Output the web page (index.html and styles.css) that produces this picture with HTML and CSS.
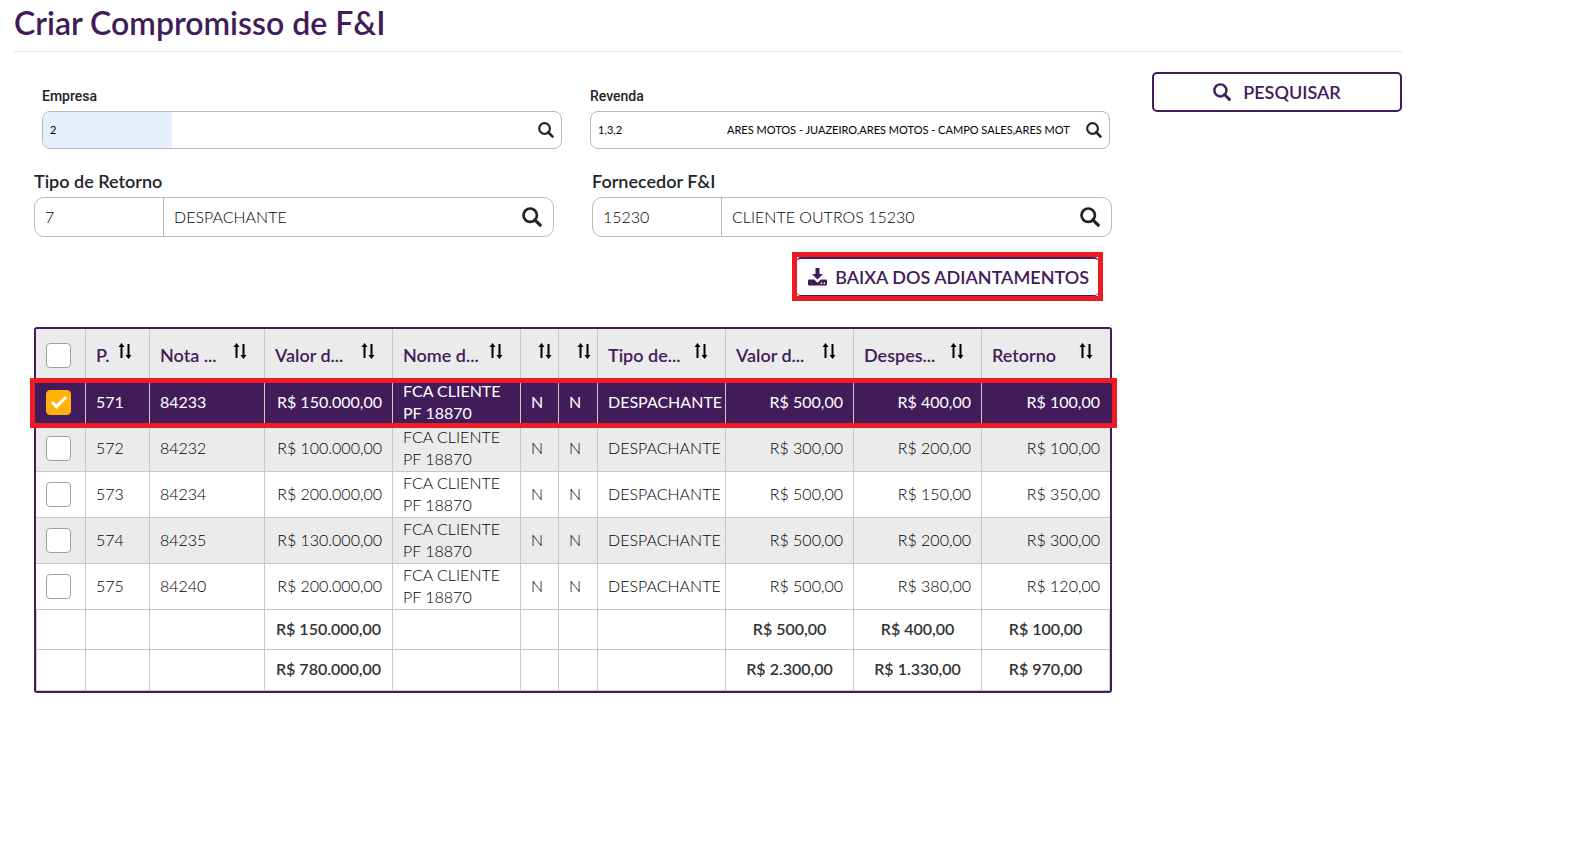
FILE: index.html
```html
<!DOCTYPE html>
<html lang="pt-BR">
<head>
  <meta charset="UTF-8">
  <meta name="viewport" content="width=device-width, initial-scale=1.0">
  <title>Criar Compromisso de F&amp;I</title>
  <link rel="stylesheet" href="styles.css">
</head>
<body>
  <svg class="symbols" aria-hidden="true">
    <symbol id="icon-search" viewBox="0 0 20 20">
      <circle cx="8.200" cy="8.200" r="6.700" fill="none" stroke="currentColor" stroke-width="2.700"/>
      <path d="M12.800 12.800l5.400 5.400" fill="none" stroke="currentColor" stroke-width="3.200" stroke-linecap="round"/>
    </symbol>
    <symbol id="icon-download" viewBox="0 0 19 18">
      <path fill="currentColor" d="M7.500 0h4v6H15L9.500 11.600 4 6h3.500z"/>
      <path fill="currentColor" fill-rule="evenodd" d="M1 11.500h5.200l3.300 3.200 3.300-3.200H18a1 1 0 0 1 1 1v4a1 1 0 0 1-1 1H1a1 1 0 0 1-1-1v-4a1 1 0 0 1 1-1zM12.600 14.500v1.500h1.500v-1.500zM15.600 14.500v1.500h1.500v-1.500z"/>
    </symbol>
    <symbol id="icon-sort" viewBox="0 0 14 16">
      <path fill="currentColor" d="M3.500 0L6.500 4H4.500v11h-2V4H.5zM9.500 1h2v11h2l-3 4-3-4h2z"/>
    </symbol>
  </svg>

  <div class="page">
    <header class="page-header">
      <h1>Criar Compromisso de F&amp;I</h1>
    </header>

    <div class="content">
      <main class="main">
        <div class="filters filters-small">
          <div class="field">
            <label for="empresa">Empresa</label>
            <div class="lookup">
              <input id="empresa" class="code filled" type="text" value="2">
              <input class="description" type="text" aria-label="Nome da empresa">
              <button type="button" aria-label="Buscar empresa"><svg><use href="#icon-search"/></svg></button>
            </div>
          </div>
          <div class="field">
            <label for="revenda">Revenda</label>
            <div class="lookup">
              <input id="revenda" class="code" type="text" value="1,3,2">
              <input class="description" type="text" aria-label="Nome da revenda" value="ARES MOTOS - JUAZEIRO,ARES MOTOS - CAMPO SALES,ARES MOT">
              <button type="button" aria-label="Buscar revenda"><svg><use href="#icon-search"/></svg></button>
            </div>
          </div>
        </div>

        <div class="filters">
          <div class="field">
            <label for="tipo">Tipo de Retorno</label>
            <div class="lookup">
              <input id="tipo" class="code" type="text" value="7">
              <input class="description" type="text" aria-label="Descrição do tipo" value="DESPACHANTE">
              <button type="button" aria-label="Buscar tipo"><svg><use href="#icon-search"/></svg></button>
            </div>
          </div>
          <div class="field">
            <label for="fornecedor">Fornecedor F&amp;I</label>
            <div class="lookup">
              <input id="fornecedor" class="code" type="text" value="15230">
              <input class="description" type="text" aria-label="Nome do fornecedor" value="CLIENTE OUTROS 15230">
              <button type="button" aria-label="Buscar fornecedor"><svg><use href="#icon-search"/></svg></button>
            </div>
          </div>
        </div>

        <div class="actions">
          <div class="marked">
            <button class="btn-settle" type="button">
              <svg><use href="#icon-download"/></svg>
              BAIXA DOS ADIANTAMENTOS
            </button>
          </div>
        </div>

        <div class="table-box">
          <table>
            <colgroup>
              <col class="col-check">
              <col class="col-proposal">
              <col class="col-invoice">
              <col class="col-wide">
              <col class="col-wide">
              <col class="col-new">
              <col class="col-used">
              <col class="col-wide">
              <col class="col-wide">
              <col class="col-wide">
              <col class="col-wide">
            </colgroup>
            <thead>
              <tr>
                <th><input type="checkbox" aria-label="Selecionar todos"></th>
                <th><div class="head"><span>P.</span><button type="button" aria-label="Ordenar"><svg><use href="#icon-sort"/></svg></button></div></th>
                <th><div class="head"><span>Nota ...</span><button type="button" aria-label="Ordenar"><svg><use href="#icon-sort"/></svg></button></div></th>
                <th><div class="head"><span>Valor d...</span><button type="button" aria-label="Ordenar"><svg><use href="#icon-sort"/></svg></button></div></th>
                <th><div class="head"><span>Nome d...</span><button type="button" aria-label="Ordenar"><svg><use href="#icon-sort"/></svg></button></div></th>
                <th class="flag"><div class="head"><button type="button" aria-label="Ordenar"><svg><use href="#icon-sort"/></svg></button></div></th>
                <th class="flag"><div class="head"><button type="button" aria-label="Ordenar"><svg><use href="#icon-sort"/></svg></button></div></th>
                <th><div class="head"><span>Tipo de...</span><button type="button" aria-label="Ordenar"><svg><use href="#icon-sort"/></svg></button></div></th>
                <th><div class="head"><span>Valor d...</span><button type="button" aria-label="Ordenar"><svg><use href="#icon-sort"/></svg></button></div></th>
                <th><div class="head"><span>Despes...</span><button type="button" aria-label="Ordenar"><svg><use href="#icon-sort"/></svg></button></div></th>
                <th><div class="head"><span>Retorno</span><button type="button" aria-label="Ordenar"><svg><use href="#icon-sort"/></svg></button></div></th>
              </tr>
            </thead>
            <tbody>
              <tr class="selected">
                <td><input type="checkbox" aria-label="Selecionar 571" checked></td>
                <td>571</td>
                <td>84233</td>
                <td class="money">R$ 150.000,00</td>
                <td>FCA CLIENTE PF 18870</td>
                <td>N</td>
                <td>N</td>
                <td>DESPACHANTE</td>
                <td class="money">R$ 500,00</td>
                <td class="money">R$ 400,00</td>
                <td class="money">R$ 100,00</td>
              </tr>
              <tr>
                <td><input type="checkbox" aria-label="Selecionar 572"></td>
                <td>572</td>
                <td>84232</td>
                <td class="money">R$ 100.000,00</td>
                <td>FCA CLIENTE PF 18870</td>
                <td>N</td>
                <td>N</td>
                <td>DESPACHANTE</td>
                <td class="money">R$ 300,00</td>
                <td class="money">R$ 200,00</td>
                <td class="money">R$ 100,00</td>
              </tr>
              <tr>
                <td><input type="checkbox" aria-label="Selecionar 573"></td>
                <td>573</td>
                <td>84234</td>
                <td class="money">R$ 200.000,00</td>
                <td>FCA CLIENTE PF 18870</td>
                <td>N</td>
                <td>N</td>
                <td>DESPACHANTE</td>
                <td class="money">R$ 500,00</td>
                <td class="money">R$ 150,00</td>
                <td class="money">R$ 350,00</td>
              </tr>
              <tr>
                <td><input type="checkbox" aria-label="Selecionar 574"></td>
                <td>574</td>
                <td>84235</td>
                <td class="money">R$ 130.000,00</td>
                <td>FCA CLIENTE PF 18870</td>
                <td>N</td>
                <td>N</td>
                <td>DESPACHANTE</td>
                <td class="money">R$ 500,00</td>
                <td class="money">R$ 200,00</td>
                <td class="money">R$ 300,00</td>
              </tr>
              <tr>
                <td><input type="checkbox" aria-label="Selecionar 575"></td>
                <td>575</td>
                <td>84240</td>
                <td class="money">R$ 200.000,00</td>
                <td>FCA CLIENTE PF 18870</td>
                <td>N</td>
                <td>N</td>
                <td>DESPACHANTE</td>
                <td class="money">R$ 500,00</td>
                <td class="money">R$ 380,00</td>
                <td class="money">R$ 120,00</td>
              </tr>
            </tbody>
            <tfoot>
              <tr>
                <td></td>
                <td></td>
                <td></td>
                <td>R$ 150.000,00</td>
                <td></td>
                <td></td>
                <td></td>
                <td></td>
                <td>R$ 500,00</td>
                <td>R$ 400,00</td>
                <td>R$ 100,00</td>
              </tr>
              <tr>
                <td></td>
                <td></td>
                <td></td>
                <td>R$ 780.000,00</td>
                <td></td>
                <td></td>
                <td></td>
                <td></td>
                <td>R$ 2.300,00</td>
                <td>R$ 1.330,00</td>
                <td>R$ 970,00</td>
              </tr>
            </tfoot>
          </table>
        </div>
      </main>

      <aside class="sidebar">
        <button class="btn-search" type="button">
          <svg><use href="#icon-search"/></svg>
          PESQUISAR
        </button>
      </aside>
    </div>
  </div>
</body>
</html>
```
FILE: styles.css
```css
* {
  margin: 0;
  padding: 0;
  box-sizing: border-box;
}

body {
  background-color: #fff;
  color: #212529;
  font-family: 'Lato', sans-serif;
  font-size: 16px;
}

button,
input {
  font-family: inherit;
  font-size: inherit;
  color: inherit;
}

button {
  background: none;
  border: none;
  cursor: pointer;
}

svg {
  display: block;
  flex: none;
}

.symbols {
  position: absolute;
  width: 0;
  height: 0;
}

.page {
  margin: 0 189px 0 14px;
}

.page-header {
  height: 52px;
  border-bottom: 1px solid #e2e2e2;
}

.page-header h1 {
  font-size: 32px;
  line-height: 46px;
  font-weight: 600;
  color: #421c5a;
}

.content {
  display: flex;
  gap: 40px;
  padding: 20px 0 0 20px;
}

.main {
  flex: 1;
  min-width: 0;
}

.sidebar {
  width: 250px;
}

/* lookup fields */
.filters {
  display: grid;
  grid-template-columns: 1fr 1fr;
  gap: 38px;
  margin-top: 20px;
}

.field label {
  display: block;
  height: 28px;
  font-size: 18px;
  line-height: 24px;
  font-weight: 600;
}

.lookup {
  display: flex;
  height: 40px;
  border: 1px solid #b9b9b9;
  border-radius: 10px;
  overflow: hidden;
}

.lookup input {
  min-width: 0;
  border: none;
  outline: none;
  background: none;
  padding: 0 0 1px 10px;
  font-weight: 300;
  color: #000;
}

.lookup .code {
  width: 129px;
  border-right: 1px solid #b9b9b9;
}

.lookup .description {
  flex: 1;
}

.lookup button {
  width: 42px;
  display: flex;
  align-items: center;
  justify-content: center;
}

.lookup svg {
  width: 20px;
  height: 20px;
}

.filters-small {
  gap: 28px;
  margin: 0 2px 0 8px;
  padding-top: 11px;
}

.filters-small label {
  font-family: 'Roboto', sans-serif;
  font-size: 14px;
  line-height: 26px;
  font-weight: 500;
}

.filters-small .lookup {
  height: 38px;
  border-radius: 8px;
  font-size: 11px;
}

.filters-small .lookup input {
  padding-left: 7px;
  font-weight: 400;
}

.filters-small .lookup .code {
  border-right: none;
}

.filters-small .lookup .filled {
  background-color: #e8effc;
}

.filters-small .lookup button {
  width: 30px;
}

.filters-small .lookup svg {
  width: 16px;
  height: 16px;
}

/* buttons */
.actions {
  display: flex;
  justify-content: flex-end;
  margin: 15px 9px 26px 0;
}

.marked {
  border: 5px solid #ed1c24;
}

.btn-settle,
.btn-search {
  display: flex;
  align-items: center;
  justify-content: center;
  font-size: 18px;
  font-weight: 600;
  color: #421c5a;
}

.btn-settle {
  gap: 8px;
  height: 39px;
  padding: 0 9px 0 11px;
  border-top: 2px solid #421c5a;
  border-bottom: 1px solid #421c5a;
  border-radius: 4px;
}

.btn-settle svg {
  width: 19px;
  height: 18px;
}

.btn-search {
  gap: 12px;
  width: 100%;
  height: 40px;
  border: 2px solid #421c5a;
  border-radius: 5px;
}

.btn-search svg {
  width: 18px;
  height: 18px;
}

/* table */
.table-box {
  border: 2px solid #421c5a;
  border-radius: 3px;
}

table {
  width: 100%;
  table-layout: fixed;
  border-collapse: separate;
  border-spacing: 0;
}

.col-check {
  width: 50px;
}

.col-proposal {
  width: 64px;
}

.col-invoice {
  width: 115px;
}

.col-wide {
  width: 128px;
}

.col-new {
  width: 38px;
}

.col-used {
  width: 39px;
}

th,
td {
  border-right: 1px solid #c8c8c8;
  border-bottom: 1px solid #c8c8c8;
  padding: 0 10px;
  text-align: left;
  vertical-align: middle;
}

th:last-child,
tbody td:last-child {
  border-right: none;
}

th {
  height: 51px;
  padding: 2px 17px 0 10px;
  background-color: #ebebeb;
  color: #421c5a;
  font-size: 18px;
  font-weight: 600;
}

.flag {
  padding-left: 0;
  padding-right: 6px;
}

.head {
  display: flex;
  align-items: center;
  justify-content: space-between;
  white-space: nowrap;
  line-height: 26px;
}

.flag .head {
  justify-content: flex-end;
  height: 26px;
}

.head button {
  padding-bottom: 8px;
  color: #000;
}

.head svg {
  width: 14px;
  height: 16px;
}

tbody td {
  height: 46px;
  padding-bottom: 1px;
  line-height: 22px;
  font-weight: 300;
  color: #000;
}

tbody tr:nth-child(even) {
  background-color: #ebebeb;
}

.money {
  text-align: right;
  white-space: nowrap;
}

tbody .selected {
  position: relative;
  background-color: #421c5a;
}

.selected td {
  color: #fff;
  font-weight: 400;
}

.selected::after {
  content: '';
  position: absolute;
  inset: -2px -7px -2px -6px;
  border: 5px solid #ed1c24;
  pointer-events: none;
}

tfoot td {
  height: 40px;
  padding: 0 0 3px;
  text-align: center;
  font-weight: 600;
  color: #333;
}

tfoot tr:last-child td {
  height: 41px;
}

tfoot td:first-child {
  border-left: 1px solid #c8c8c8;
}

input[type="checkbox"] {
  appearance: none;
  display: block;
  width: 25px;
  height: 25px;
  background-color: #fff;
  border: 1px solid #a0a0a0;
  border-radius: 4px;
}

input[type="checkbox"]:checked {
  border-color: #ffb20a;
  background-color: #ffb20a;
}

input[type="checkbox"]:checked::after {
  content: '';
  display: block;
  width: 5px;
  height: 12px;
  margin: 2px auto 0;
  border: solid #fff;
  border-width: 0 3px 3px 0;
  transform: rotate(45deg);
}
```
